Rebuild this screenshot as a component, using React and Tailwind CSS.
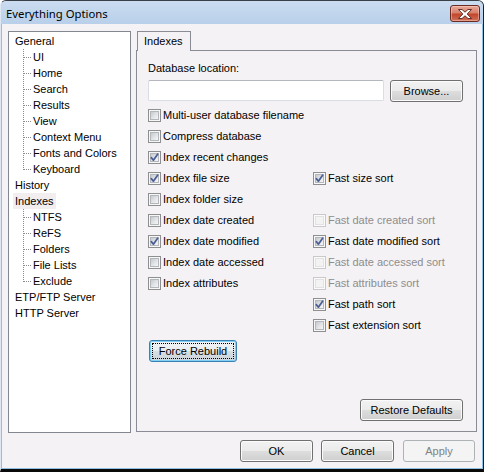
import React from "react";

function Check({ checked = false, disabled = false }) {
  return (
    <span
      className={
        disabled
          ? "relative flex h-[13px] w-[13px] shrink-0 items-center justify-center border border-[#c9c9c9] bg-[#fbfbfb]"
          : "relative flex h-[13px] w-[13px] shrink-0 items-center justify-center border border-[#8e8f8f] bg-[#f7f7f7]"
      }
    >
      <span
        className={
          disabled
            ? "h-[9px] w-[9px] border border-[#e2e2e2] bg-[#f3f3f3]"
            : "h-[9px] w-[9px] border border-[#b3b6ba] bg-[linear-gradient(135deg,#c5c9cf_0%,#e3e4e6_55%,#f6f6f6_100%)]"
        }
      />
      {checked && (
        <svg
          className="absolute left-0 top-0"
          width="11"
          height="11"
          viewBox="0 0 11 11"
        >
          <path
            d="M2.3 5.6 L4.4 8.2 L8.6 2.2"
            fill="none"
            stroke="#4a5d94"
            strokeWidth="1.7"
            strokeLinecap="round"
            strokeLinejoin="round"
          />
        </svg>
      )}
    </span>
  );
}

function Row({ label, checked, disabled }) {
  return (
    <div className="flex h-[21px] items-center gap-[2px]">
      <Check checked={checked} disabled={disabled} />
      <span className={disabled ? "whitespace-nowrap text-[#8d8d8d]" : "whitespace-nowrap"}>
        {label}
      </span>
    </div>
  );
}

function Btn({ children, className = "", disabled = false }) {
  return (
    <div
      className={
        disabled
          ? "flex h-[22px] items-center justify-center rounded-[3px] border border-[#adb2b5] bg-[#f4f4f4] text-[#838383] " + className
          : "flex h-[22px] items-center justify-center rounded-[3px] border border-[#707070] bg-[linear-gradient(to_bottom,#f2f2f2_0%,#ebebeb_48%,#dddddd_52%,#cfcfcf_100%)] shadow-[inset_0_0_0_1px_#fbfbfb] " + className
      }
    >
      {children}
    </div>
  );
}

function Conn({ last = false }) {
  return (
    <svg width="10" height="16" viewBox="0 0 10 16" className="ml-[8px] shrink-0" shapeRendering="crispEdges">
      <line x1="0.5" y1={0} x2="0.5" y2={last ? 9 : 16} stroke="#8a8a8a" strokeDasharray="1 1" />
      <line x1="1" y1="8.5" x2="9" y2="8.5" stroke="#8a8a8a" strokeDasharray="1 1" />
    </svg>
  );
}

function Top({ label, selected }) {
  return (
    <div className="flex h-[16px] items-center pl-[6px]">
      <span className={selected ? "-ml-[2px] bg-[#f2edee] px-[2px] leading-[16px]" : "leading-[16px]"}>{label}</span>
    </div>
  );
}

function Child({ label, last }) {
  return (
    <div className="flex h-[16px] items-center pl-[6px]">
      <Conn last={last} />
      <span className="whitespace-nowrap leading-[16px]">{label}</span>
    </div>
  );
}

export default function App() {
  return (
    <div className="flex h-[472px] w-[484px] flex-col overflow-hidden rounded-t-[6px] border-t border-r border-b-[3px] border-l border-t-[#3b4047] border-r-[#1e1f21] border-b-[#0a0a0a] border-l-[#dfe8f2] bg-[#8fc0e6] font-['Liberation_Sans',sans-serif] text-[11px] leading-[13px] text-black">
      {/* title bar */}
      <div className="flex h-[23px] shrink-0 items-start justify-between bg-[linear-gradient(to_bottom,#cadcf0,#b9d0ea)] pl-[5px] pr-[3px]">
        <span className="pt-[5px] font-['Noto_Sans',sans-serif] text-[11.3px] leading-[16px] text-black">
          Everything Options
        </span>
        <div className="mt-[4px] flex h-[17px] w-[30px] items-center justify-center rounded-[3px] border border-[#6b2b21] bg-[linear-gradient(to_bottom,#e9a898_0%,#d7826d_45%,#c2462c_55%,#d0705a_100%)] shadow-[inset_0_0_0_1px_rgba(255,220,210,0.45)]">
          <svg width="14" height="10" viewBox="0 0 14 10">
            <polygon
              points="0.5,0.5 4,0.5 7,3.2 10,0.5 13.5,0.5 9.2,5 13.5,9.5 10,9.5 7,6.8 4,9.5 0.5,9.5 4.8,5"
              fill="#ffffff"
              stroke="#5a231a"
              strokeWidth="0.9"
              strokeLinejoin="round"
            />
          </svg>
        </div>
      </div>

      {/* body */}
      <div className="mx-[1px] flex h-[444px] shrink-0 flex-col bg-[#f5f2f5] pl-[6px] pr-[5px] pt-[7px]">
        <div className="flex h-[402px] items-start gap-[5px]">
          {/* tree */}
          <div className="h-[402px] w-[123px] shrink-0 border border-[#828790] bg-white pt-[1px]">
            <Top label="General" />
            <Child label="UI" />
            <Child label="Home" />
            <Child label="Search" />
            <Child label="Results" />
            <Child label="View" />
            <Child label="Context Menu" />
            <Child label="Fonts and Colors" />
            <Child label="Keyboard" last />
            <Top label="History" />
            <Top label="Indexes" selected />
            <Child label="NTFS" />
            <Child label="ReFS" />
            <Child label="Folders" />
            <Child label="File Lists" />
            <Child label="Exclude" last />
            <Top label="ETP/FTP Server" />
            <Top label="HTTP Server" />
          </div>

          {/* tabs */}
          <div className="flex h-[401px] w-[341px] shrink-0 flex-col">
            <div className="relative z-10 -mb-[1px] ml-[1px] h-[20px] w-[54px] border-l border-r border-t border-[#898c95] bg-[#f5f2f5] pl-[6px] pt-[3px]">
              Indexes
            </div>
            <div className="flex flex-1 flex-col border border-[#898c95] pb-[10px] pl-[11px] pr-[13px] pt-[11px]">
              <div>Database location:</div>
              <div className="mt-[5px] flex h-[22px] items-start">
                <div className="h-[21px] w-[236px] rounded-[2px] border border-[#dadde3] border-t-[#b4b7be] bg-white" />
                <Btn className="ml-[6px] w-[73px]">Browse...</Btn>
              </div>
              <div className="mt-[3px] grid grid-cols-[165px_1fr]">
                <Row label="Multi-user database filename" />
                <div />
                <Row label="Compress database" />
                <div />
                <Row label="Index recent changes" checked />
                <div />
                <Row label="Index file size" checked />
                <Row label="Fast size sort" checked />
                <Row label="Index folder size" />
                <div />
                <Row label="Index date created" />
                <Row label="Fast date created sort" disabled />
                <Row label="Index date modified" checked />
                <Row label="Fast date modified sort" checked />
                <Row label="Index date accessed" />
                <Row label="Fast date accessed sort" disabled />
                <Row label="Index attributes" />
                <Row label="Fast attributes sort" disabled />
                <div />
                <Row label="Fast path sort" checked />
                <div />
                <Row label="Fast extension sort" />
              </div>
              <div className="ml-[1px] mt-[4px] flex h-[22px] w-[88px] rounded-[3px] border border-[#3c7fb1] bg-[linear-gradient(to_bottom,#f1f4f6_0%,#e8edf0_48%,#d8dfe4_52%,#cbd4da_100%)] p-[2px] shadow-[inset_0_0_0_1px_#7fd2f6]">
                <div className="flex flex-1 items-center justify-center border border-dotted border-black">
                  Force Rebuild
                </div>
              </div>
              <div className="flex-1" />
              <Btn className="self-end w-[103px]">Restore Defaults</Btn>
            </div>
          </div>
        </div>

        <div className="mt-[7px] flex justify-end pr-[2px]">
          <Btn className="w-[73px]">OK</Btn>
          <Btn className="ml-[8px] w-[73px]">Cancel</Btn>
          <Btn className="ml-[9px] w-[72px]" disabled>
            Apply
          </Btn>
        </div>
      </div>
    </div>
  );
}
